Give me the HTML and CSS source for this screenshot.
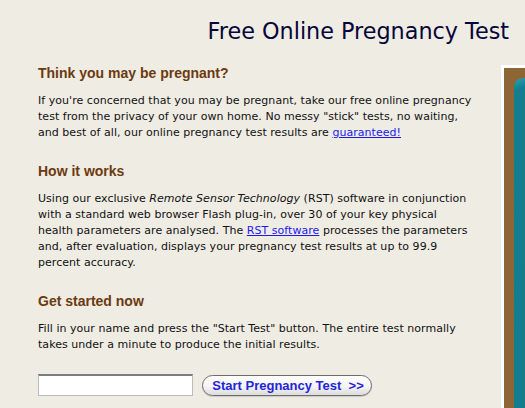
FILE: index.html
```html
<!DOCTYPE html>
<html>
<head>
<meta charset="utf-8">
<link rel="stylesheet" href="styles.css">
</head>
<body>
<header class="top">
  <h1 class="title">Free Online Pregnancy Test</h1>
</header>
<div class="layout">
  <main class="content">
    <h2 class="heading">Think you may be pregnant?</h2>
    <p class="para">If you're concerned that you may be pregnant, take our free online pregnancy<br>test from the privacy of your own home. No messy "stick" tests, no waiting,<br>and best of all, our online pregnancy test results are <a href="#" class="link">guaranteed!</a></p>
    <h2 class="heading">How it works</h2>
    <p class="para">Using our exclusive <em>Remote Sensor Technology</em> (RST) software in conjunction<br>with a standard web browser Flash plug-in, over 30 of your key physical<br>health parameters are analysed. The <a href="#" class="link">RST software</a> processes the parameters<br>and, after evaluation, displays your pregnancy test results at up to 99.9<br>percent accuracy.</p>
    <h2 class="heading">Get started now</h2>
    <p class="para">Fill in your name and press the "Start Test" button. The entire test normally<br>takes under a minute to produce the initial results.</p>
    <form class="form">
      <input class="name-input" type="text">
      <button class="start-btn" type="button">Start Pregnancy Test&nbsp; &gt;&gt;</button>
    </form>
  </main>
  <aside class="sidebar">
    <div class="frame">
      <div class="panel"></div>
    </div>
  </aside>
</div>
</body>
</html>
```
FILE: styles.css
```css
html, body {
  margin: 0;
  padding: 0;
}
body {
  background: #efece4;
  font-family: "DejaVu Sans", Verdana, sans-serif;
  color: #111;
  width: 525px;
  height: 408px;
  overflow: hidden;
}
.top {
  display: flex;
  justify-content: flex-end;
  padding: 16px 16px 0 0;
}
.title {
  margin: 0;
  font-family: "DejaVu Sans", Verdana, sans-serif;
  font-weight: normal;
  font-size: 22.3px;
  line-height: 30px;
  color: #06063a;
}
.layout {
  display: flex;
  margin-top: 18px;
}
.content {
  width: 450px;
  padding-left: 38px;
  flex: none;
}
.heading {
  margin: 0 0 11px;
  font-family: "Liberation Sans", Arial, sans-serif;
  font-weight: bold;
  font-size: 14px;
  line-height: 18px;
  color: #6b3a0f;
}
.para {
  margin: 0 0 21px;
  font-size: 11px;
  line-height: 16px;
  letter-spacing: 0.04px;
  white-space: nowrap;
  color: #111;
}
.link {
  color: #1a1aee;
  text-decoration: underline;
}
.form {
  display: flex;
  align-items: center;
  gap: 9px;
}
.name-input {
  box-sizing: border-box;
  width: 155px;
  height: 22px;
  margin: 0;
  background: #fff;
  border: 1px solid #bcbcbc;
  border-top: 2px solid #7c7c7c;
}
.start-btn {
  box-sizing: border-box;
  width: 170px;
  height: 21px;
  padding: 0 0 0 2px;
  border: 1px solid #6e6e6e;
  border-radius: 11px;
  background: linear-gradient(#ffffff, #f4f4f4 55%, #dcdcdc);
  font-family: "Liberation Sans", Arial, sans-serif;
  font-weight: bold;
  font-size: 13px;
  color: #2424d8;
  box-shadow: 0 1px 1px rgba(0,0,0,0.15);
}
.sidebar {
  box-sizing: border-box;
  margin-left: 13px;
  margin-top: 1px;
  flex: 1;
  background: #fff;
  padding: 3px 0 0 3px;
  height: 343px;
}
.frame {
  box-sizing: border-box;
  background: #8e6535;
  padding: 10px 0 0 10px;
  height: 100%;
}
.panel {
  height: 100%;
  background: linear-gradient(160deg, #20a6b8 0, #137f8e 12px, #127e8d);
  border-top-left-radius: 9px;
}
```
